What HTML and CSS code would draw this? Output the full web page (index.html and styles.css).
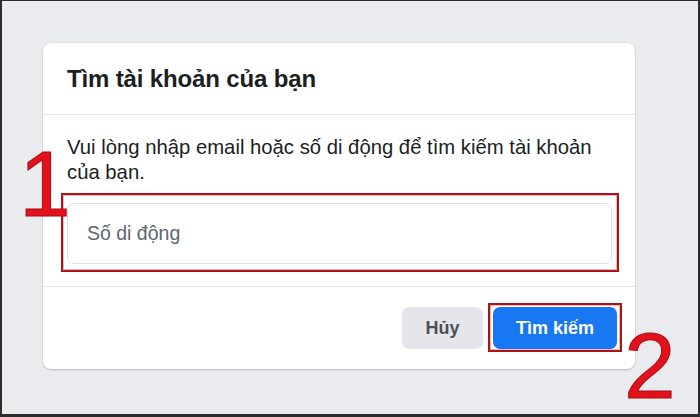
FILE: index.html
```html
<!DOCTYPE html>
<html lang="vi">
<head>
<meta charset="utf-8">
<title>Tìm tài khoản của bạn</title>
<link rel="stylesheet" href="styles.css">
</head>
<body>
<div class="frame">
  <div class="card">
    <div class="card-header">
      <h2 class="title">Tìm tài khoản của bạn</h2>
    </div>
    <div class="card-body">
      <p class="desc">Vui lòng nhập email hoặc số di động để tìm kiếm tài khoản của bạn.</p>
      <div class="field-wrap">
        <input class="field" type="text" placeholder="Số di động">
        <span class="mark mark-input"></span>
      </div>
    </div>
    <div class="card-footer">
      <button class="btn btn-cancel" type="button">Hủy</button>
      <div class="btn-wrap">
        <button class="btn btn-primary" type="button">Tìm kiếm</button>
        <span class="mark mark-btn"></span>
      </div>
    </div>
  </div>
  <span class="step step-1">1</span>
  <span class="step step-2">2</span>
</div>
</body>
</html>
```

FILE: styles.css
```css
* { box-sizing: border-box; }
html, body { margin: 0; padding: 0; }
body {
  font-family: "Liberation Sans", Arial, sans-serif;
  background: #2d2d2d;
}
.frame {
  position: relative;
  width: 700px;
  height: 417px;
  background: #e9ebee;
  border-style: solid;
  border-color: #2d2d2d;
  border-width: 1px 2px 3px 2px;
  padding: 42px 0 0 41px;
}
.card {
  width: 592px;
  background: #fff;
  border-radius: 8px;
  box-shadow: 0 1px 2px rgba(0,0,0,0.18), 0 0 0 1px rgba(0,0,0,0.03);
}
.card-header {
  height: 72px;
  display: flex;
  align-items: center;
  padding: 0 24px;
  border-bottom: 1px solid #e4e6e9;
}
.title {
  margin: 0;
  font-size: 24px;
  font-weight: bold;
  color: #1c1e21;
  letter-spacing: -0.15px;
}
.card-body {
  padding: 20px 23px 22px 24px;
  border-bottom: 1px solid #e4e6e9;
}
.desc {
  margin: 0 0 18px;
  font-size: 20.3px;
  line-height: 25px;
  color: #1c1e21;
}
.field-wrap { position: relative; }
.field {
  display: block;
  width: 100%;
  height: 61px;
  border: 1px solid #dddfe2;
  border-radius: 7px;
  padding: 0 19px;
  font-family: inherit;
  font-size: 19.5px;
  color: #1c1e21;
  background: #fff;
  outline: none;
}
.field::placeholder { color: #606770; }
.mark {
  position: absolute;
  border: 2px solid #a8141a;
  box-shadow: inset 0 0 0 1px #f2b8b8;
  pointer-events: none;
}
.mark-input { left: -6px; top: -10px; right: -7px; bottom: -8px; }
.card-footer {
  display: flex;
  justify-content: flex-end;
  gap: 10px;
  padding: 20px 18px 20px 24px;
}
.btn {
  height: 42px;
  border: none;
  border-radius: 7px;
  font-family: inherit;
  font-size: 18px;
  font-weight: bold;
  cursor: pointer;
}
.btn-cancel {
  width: 81px;
  background: #e4e6eb;
  color: #4b4f56;
}
.btn-wrap { position: relative; }
.btn-primary {
  width: 124px;
  background: #1877f2;
  color: #fff;
}
.mark-btn { left: -5px; top: -4px; right: -5px; bottom: -3px; }
.step {
  position: absolute;
  font-family: "Liberation Sans", Arial, sans-serif;
  font-size: 93px;
  line-height: 1;
  color: #e3111b;
  -webkit-text-stroke: 1px #a40f14;
}
.step-1 { left: 17px; top: 137px; }
.step-2 { left: 622px; top: 319px; }
```
